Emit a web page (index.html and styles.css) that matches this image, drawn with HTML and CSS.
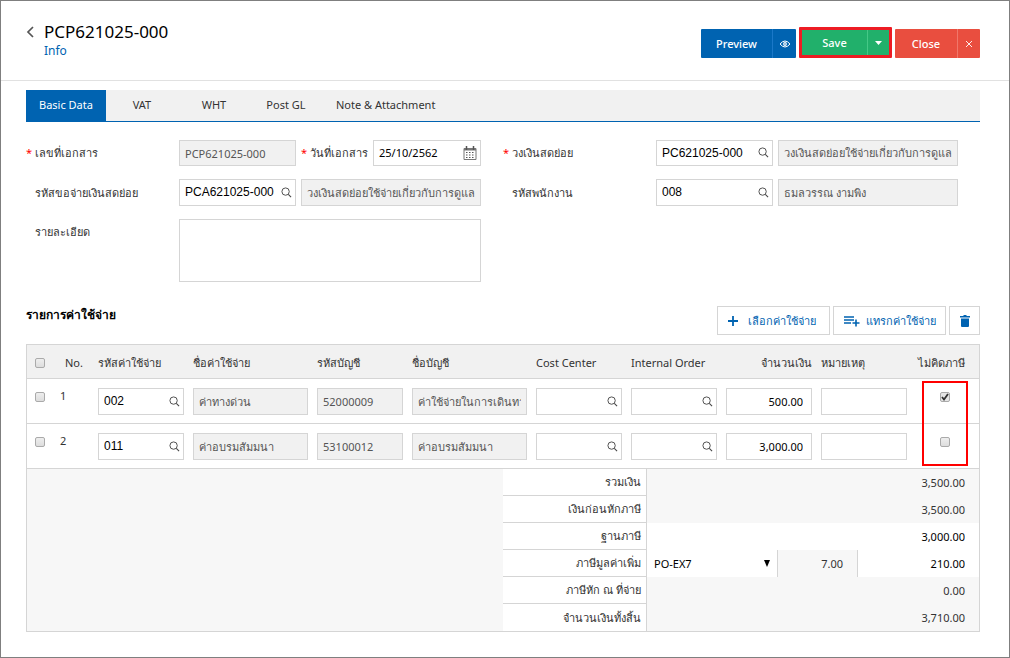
FILE: index.html
```
<!DOCTYPE html>
<html lang="th">
<head>
    <meta charset="UTF-8">
    <meta name="viewport" content="width=device-width, initial-scale=1.0">
    <title>PCP621025-000</title>
    <link rel="stylesheet" href="styles.css">
</head>
<body>
    <!-- Shared icons -->
    <svg class="sprite" aria-hidden="true">
        <symbol id="search" viewBox="0 0 12 12">
            <circle cx="5" cy="5" r="4" fill="none" stroke="currentColor"/>
            <path d="M8 8l3 3" stroke="currentColor" stroke-width="1.2"/>
        </symbol>
    </svg>

    <header class="page-header">
        <button class="back" aria-label="Back">
            <svg width="8" height="12" viewBox="0 0 8 12"><path d="M7 1L2 6l5 5" fill="none" stroke="#555" stroke-width="1.7"/></svg>
        </button>
        <div class="heading">
            <h1>PCP621025-000</h1>
            <a href="#">Info</a>
        </div>
        <div class="actions">
            <div class="split preview">
                <button>Preview</button>
                <button aria-label="Show preview">
                    <svg width="12" height="10" viewBox="0 0 12 10"><path d="M1 5Q6-1 11 5Q6 11 1 5z" fill="none" stroke="#fff"/><circle cx="6" cy="5" r="1.900" fill="#fff"/><circle cx="6" cy="5" r=".7" fill="#0063b1"/></svg>
                </button>
            </div>
            <div class="split save">
                <button>Save</button>
                <button aria-label="More save options">
                    <svg width="8" height="4" viewBox="0 0 8 4"><path d="M0 0h7L3.500 4z" fill="#fff"/></svg>
                </button>
            </div>
            <div class="split close">
                <button>Close</button>
                <button aria-label="Close page">
                    <svg width="8" height="8" viewBox="0 0 8 8"><path d="M1 1l6 6M7 1L1 7" stroke="#fff" stroke-width=".9"/></svg>
                </button>
            </div>
        </div>
    </header>

    <main>
        <nav class="tabs">
            <a class="active" href="#">Basic Data</a>
            <a href="#">VAT</a>
            <a href="#">WHT</a>
            <a href="#">Post GL</a>
            <a href="#">Note &amp; Attachment</a>
        </nav>

        <form class="form">
            <div class="form-column">
                <label class="required" for="docNo">เลขที่เอกสาร</label>
                <input class="box" id="docNo" value="PCP621025-000" readonly>
                <div class="date-group">
                    <label class="required" for="docDate">วันที่เอกสาร</label>
                    <div class="lookup date">
                        <input id="docDate" value="25/10/2562">
                        <button type="button" aria-label="Choose date">
                            <svg width="14" height="14" viewBox="0 0 14 14"><path d="M1 2.500h12v11H1z" fill="#fff" stroke="#777"/><path d="M1 2h12v2.500H1z" fill="#777"/><path d="M3.500 0v4M10.500 0v4" stroke="#555" stroke-width="1.500"/><path d="M3 6.500h9M3 9h9M3 11.500h9" stroke="#555" stroke-dasharray="1.500 1.500"/></svg>
                        </button>
                    </div>
                </div>

                <label for="requestNo">รหัสขอจ่ายเงินสดย่อย</label>
                <div class="lookup">
                    <input id="requestNo" value="PCA621025-000">
                    <button type="button" aria-label="Search"><svg><use href="#search"/></svg></button>
                </div>
                <input class="box" aria-label="Request name" value="วงเงินสดย่อยใช้จ่ายเกี่ยวกับการดูแลบ้าน" readonly>

                <label for="detail">รายละเอียด</label>
                <textarea class="box" id="detail"></textarea>
            </div>

            <div class="form-column">
                <label class="required" for="cashNo">วงเงินสดย่อย</label>
                <div class="lookup">
                    <input id="cashNo" value="PC621025-000">
                    <button type="button" aria-label="Search"><svg><use href="#search"/></svg></button>
                </div>
                <input class="box" aria-label="Petty cash name" value="วงเงินสดย่อยใช้จ่ายเกี่ยวกับการดูแลบ้าน" readonly>

                <label for="empNo">รหัสพนักงาน</label>
                <div class="lookup">
                    <input id="empNo" value="008">
                    <button type="button" aria-label="Search"><svg><use href="#search"/></svg></button>
                </div>
                <input class="box" aria-label="Employee name" value="ธมลวรรณ งามพิง" readonly>
            </div>
        </form>

        <div class="section-bar">
            <h2>รายการค่าใช้จ่าย</h2>
            <button class="tool">
                <svg width="10" height="10" viewBox="0 0 10 10"><path d="M5 0v10M0 5h10" stroke="currentColor" stroke-width="1.800"/></svg>
                เลือกค่าใช้จ่าย
            </button>
            <button class="tool insert">
                <svg width="16" height="12" viewBox="0 0 16 12"><path d="M0 2h10M0 5h10M0 8h7M12 4.500v7M8.500 8h7" stroke="currentColor" stroke-width="1.600"/></svg>
                แทรกค่าใช้จ่าย
            </button>
            <button class="tool delete" aria-label="Delete">
                <svg width="10" height="12" viewBox="0 0 10 12"><path d="M0 1h3l1-1h2l1 1h3v1.500H0zM1 3.500h8V11q0 1-1 1H2q-1 0-1-1z" fill="currentColor"/></svg>
            </button>
        </div>

        <div class="expenses">
            <table class="items">
                <colgroup>
                    <col class="c-check"><col class="c-no"><col class="c-code"><col class="c-name"><col class="c-code"><col class="c-name"><col class="c-code"><col class="c-code"><col class="c-code"><col class="c-code"><col class="c-tax">
                </colgroup>
                <thead>
                    <tr>
                        <th class="check"><input type="checkbox" aria-label="Select all"></th>
                        <th class="no">No.</th>
                        <th>รหัสค่าใช้จ่าย</th>
                        <th>ชื่อค่าใช้จ่าย</th>
                        <th>รหัสบัญชี</th>
                        <th>ชื่อบัญชี</th>
                        <th>Cost Center</th>
                        <th>Internal Order</th>
                        <th class="num">จำนวนเงิน</th>
                        <th>หมายเหตุ</th>
                        <th class="tax">ไม่คิดภาษี</th>
                    </tr>
                </thead>
                <tbody>
                    <tr>
                        <td class="check"><input type="checkbox" aria-label="Select row 1"></td>
                        <td class="no">1</td>
                        <td><div class="lookup"><input aria-label="Expense code" value="002"><button aria-label="Search"><svg><use href="#search"/></svg></button></div></td>
                        <td><input class="box" aria-label="Expense name" value="ค่าทางด่วน" readonly></td>
                        <td><input class="box" aria-label="Account code" value="52000009" readonly></td>
                        <td><input class="box" aria-label="Account name" value="ค่าใช้จ่ายในการเดินทาง" readonly></td>
                        <td><div class="lookup"><input aria-label="Cost Center"><button aria-label="Search"><svg><use href="#search"/></svg></button></div></td>
                        <td><div class="lookup"><input aria-label="Internal Order"><button aria-label="Search"><svg><use href="#search"/></svg></button></div></td>
                        <td><input class="box amount" aria-label="Amount" value="500.00"></td>
                        <td><input class="box" aria-label="Remark"></td>
                        <td class="tax"><input type="checkbox" aria-label="No tax" checked></td>
                    </tr>
                    <tr>
                        <td class="check"><input type="checkbox" aria-label="Select row 2"></td>
                        <td class="no">2</td>
                        <td><div class="lookup"><input aria-label="Expense code" value="011"><button aria-label="Search"><svg><use href="#search"/></svg></button></div></td>
                        <td><input class="box" aria-label="Expense name" value="ค่าอบรมสัมมนา" readonly></td>
                        <td><input class="box" aria-label="Account code" value="53100012" readonly></td>
                        <td><input class="box" aria-label="Account name" value="ค่าอบรมสัมมนา" readonly></td>
                        <td><div class="lookup"><input aria-label="Cost Center"><button aria-label="Search"><svg><use href="#search"/></svg></button></div></td>
                        <td><div class="lookup"><input aria-label="Internal Order"><button aria-label="Search"><svg><use href="#search"/></svg></button></div></td>
                        <td><input class="box amount" aria-label="Amount" value="3,000.00"></td>
                        <td><input class="box" aria-label="Remark"></td>
                        <td class="tax"><input type="checkbox" aria-label="No tax"></td>
                    </tr>
                </tbody>
            </table>
            <div class="highlight"></div>

            <!-- Totals -->
            <table class="totals">
                <colgroup>
                    <col class="t-blank"><col class="t-label"><col class="t-code"><col class="t-rate"><col class="t-value">
                </colgroup>
                <tr>
                    <td rowspan="6"></td>
                    <th>รวมเงิน</th>
                    <td colspan="3">3,500.00</td>
                </tr>
                <tr>
                    <th>เงินก่อนหักภาษี</th>
                    <td colspan="3">3,500.00</td>
                </tr>
                <tr>
                    <th><label for="taxBase">ฐานภาษี</label></th>
                    <td class="edit" colspan="3"><input id="taxBase" value="3,000.00"></td>
                </tr>
                <tr>
                    <th><label for="vatCode">ภาษีมูลค่าเพิ่ม</label></th>
                    <td class="edit">
                        <div class="select">
                            <select id="vatCode"><option>PO-EX7</option></select>
                            <svg width="6" height="7" viewBox="0 0 6 7"><path d="M0 0h6L3 7z"/></svg>
                        </div>
                    </td>
                    <td class="rate">7.00</td>
                    <td class="edit"><input aria-label="VAT amount" value="210.00"></td>
                </tr>
                <tr>
                    <th>ภาษีหัก ณ ที่จ่าย</th>
                    <td colspan="3">0.00</td>
                </tr>
                <tr>
                    <th>จำนวนเงินทั้งสิ้น</th>
                    <td colspan="3">3,710.00</td>
                </tr>
            </table>
        </div>
    </main>
</body>
</html>
```
FILE: styles.css
```
* {
    box-sizing: border-box;
}
body {
    margin: 0;
    min-height: 100vh;
    border: 1px solid #7f7f7f;
    background-color: #fff;
    color: #333;
    font-family: "Noto Sans", sans-serif;
    font-size: 11px;
    line-height: 16px;
}
button, input, select, textarea {
    margin: 0;
    font: inherit;
    color: inherit;
}
button {
    padding: 0;
    border: none;
    background: none;
    cursor: pointer;
}
a {
    color: inherit;
    text-decoration: none;
}
.sprite {
    display: none;
}

/* Header */
.page-header {
    display: flex;
    height: 80px;
    padding: 19px 29px 0 25px;
    border-bottom: 1px solid #e1e1e1;
}
.back {
    width: 18px;
    height: 24px;
    text-align: left;
}
.back svg {
    display: block;
}
.heading {
    flex: 1;
}
h1 {
    margin: 0;
    color: #000;
    font-size: 17px;
    font-weight: normal;
    line-height: 23px;
}
.heading a {
    display: block;
    color: #0063b1;
    font-size: 12px;
}
.actions {
    display: flex;
    align-items: flex-start;
    gap: 3px;
    padding-top: 9px;
}
.split {
    display: flex;
    height: 29px;
    color: #fff;
    font-size: 11px;
    font-weight: 500;
    border-radius: 1px;
}
.split button {
    display: flex;
    align-items: center;
    justify-content: center;
}
.split button:first-child {
    width: 71px;
}
.split button:last-child {
    width: 24px;
    border-left: 1px solid #1b78c8;
}
.preview {
    background-color: #0063b1;
}
.save {
    height: 31px;
    margin-top: -2px;
    border: 3px solid #ed1c24;
    background-color: #21b06b;
}
.save button:first-child {
    width: 65px;
}
.save button:last-child {
    width: 22px;
    border-color: #45c887;
}
.close {
    background-color: #e94e3f;
}
.close button:first-child {
    width: 62px;
}
.close button:last-child {
    width: 23px;
    border-color: #f0776a;
}

/* Tabs */
main {
    padding: 9px 29px 20px 25px;
}
.tabs {
    display: flex;
    background-color: #f1f1f1;
    border-bottom: 1px solid #0063b1;
}
.tabs a {
    min-width: 72px;
    padding: 7px 14px 8px;
    text-align: center;
}
.tabs .active {
    padding: 7px 13px 8px;
    background-color: #0063b1;
    color: #fff;
}

/* Inputs */
.box, .lookup {
    display: block;
    width: 100%;
    min-width: 0;
    height: 27px;
    border: 1px solid #d5d5d5;
    border-radius: 0;
    background-color: #fff;
    color: #000;
}
.box {
    padding: 0 5px;
    outline: none;
}
.box:read-only {
    background-color: #f1f1f1;
    color: #555;
}
.lookup {
    display: flex;
    align-items: center;
    padding: 0 3px 1px 5px;
    font-family: "Liberation Sans", sans-serif;
    font-size: 12px;
}
.lookup input {
    flex: 1;
    min-width: 0;
    padding: 0;
    border: none;
    outline: none;
    background: none;
}
.lookup svg {
    display: block;
    width: 11px;
    height: 11px;
    color: #444;
}
.date {
    font-family: "Noto Sans", sans-serif;
    font-size: 11px;
}
.date svg {
    width: 14px;
    height: 14px;
}
input[type="checkbox"] {
    appearance: none;
    display: block;
    width: 10px;
    height: 10px;
    border: 1px solid #aaa;
    border-radius: 2px;
    background: linear-gradient(#eee, #ddd);
}
input[type="checkbox"]:checked {
    background: url("data:image/svg+xml,%3Csvg xmlns='http://www.w3.org/2000/svg' viewBox='0 0 8 8'%3E%3Cpath d='M1 4l2 2.500L7 1' fill='none' stroke='%23333' stroke-width='1.800'/%3E%3C/svg%3E") #e6e6e6;
}

/* Form */
.form {
    display: grid;
    grid-template-columns: 1fr 1fr;
    padding-top: 18px;
}
.form-column {
    display: grid;
    grid-template-columns: minmax(0, 148fr) minmax(0, 117fr) minmax(0, 180fr);
    grid-template-rows: 26px 27px;
    gap: 13px 5px;
    align-content: start;
    align-items: center;
    padding-right: 22px;
}
.form-column label {
    position: relative;
    padding-left: 9px;
    white-space: nowrap;
}
.form-column .box, .form-column .lookup {
    height: 100%;
}
.required::before {
    content: "*";
    position: absolute;
    left: 0;
    color: #f00;
}
.date-group {
    display: flex;
    align-items: center;
    height: 100%;
}
.date-group label {
    flex: 1;
}
.date-group .lookup {
    width: 60%;
}
.form-column label[for="detail"] {
    align-self: start;
    padding-top: 5px;
}
.form-column textarea {
    grid-column: 2 / 4;
    min-height: 63px;
    resize: none;
}

/* Section title and buttons */
.section-bar {
    display: flex;
    gap: 3px;
    margin-top: 24px;
}
h2 {
    flex: 1;
    margin: 0;
    color: #000;
    font-size: 12px;
    line-height: 18px;
}
.tool {
    display: flex;
    align-items: center;
    justify-content: center;
    gap: 10px;
    width: 113px;
    height: 29px;
    padding-right: 4px;
    border: 1px solid #d5d5d5;
    color: #0063b1;
    white-space: nowrap;
}
.insert {
    gap: 6px;
    padding-right: 0;
}
.delete {
    width: 31px;
    padding-right: 0;
}

/* Expense table */
.expenses {
    position: relative;
    margin-top: 9px;
    border: 1px solid #d5d5d5;
}
table {
    width: 100%;
    table-layout: fixed;
    border-collapse: separate;
    border-spacing: 0;
}
.c-check { width: 26px; }
.c-no { width: 40px; }
.c-code { width: 95px; }
.c-name { width: 124px; }
.c-tax { width: 68px; }
.items th {
    height: 34px;
    padding: 2px 4px 0 5px;
    border-bottom: 1px solid #d5d5d5;
    background-color: #f1f1f1;
    font-weight: normal;
    text-align: left;
    white-space: nowrap;
}
.items td {
    padding: 9px 4px 8px 5px;
    border-bottom: 1px solid #d5d5d5;
    vertical-align: top;
}
.items .check {
    padding-left: 8px;
}
.items td.check, .items td.tax {
    padding-top: 13px;
}
.items .no {
    padding-left: 7px;
}
.items th.no {
    padding-left: 12px;
}
.items th.num {
    text-align: right;
}
.items th.tax {
    padding-right: 14px;
    text-align: right;
}
.items td.tax input {
    margin-left: 24px;
}
.amount {
    padding-right: 8px;
    text-align: right;
}
.highlight {
    position: absolute;
    top: 36px;
    right: 11px;
    width: 46px;
    height: 85px;
    border: 2px solid #f00;
    pointer-events: none;
}

/* Totals */
.t-blank { width: 476px; }
.t-label { width: 144px; }
.t-code { width: 130px; }
.t-rate { width: 81px; }
.t-value { width: 121px; }
.totals th, .totals td {
    height: 27px;
    padding: 0 14px 0 5px;
    text-align: right;
}
.totals th {
    padding-right: 5px;
    border-right: 1px solid #d5d5d5;
    border-bottom: 1px solid #d5d5d5;
    background-color: #fff;
    font-weight: normal;
}
.totals tr:last-child th {
    border-bottom: none;
}
.totals td {
    background-color: #f7f7f7;
}
.totals td.edit {
    background-color: #fff;
    color: #000;
}
.edit input {
    display: block;
    width: 100%;
    padding: 0;
    border: none;
    background: none;
    text-align: right;
}
.totals .rate {
    border-left: 1px solid #d5d5d5;
    border-right: 1px solid #d5d5d5;
}
.totals td:has(.select) {
    padding: 0 7px;
}
.select {
    display: flex;
    align-items: center;
}
.select select {
    flex: 1;
    appearance: none;
    padding: 0;
    border: none;
    background: none;
}
```
